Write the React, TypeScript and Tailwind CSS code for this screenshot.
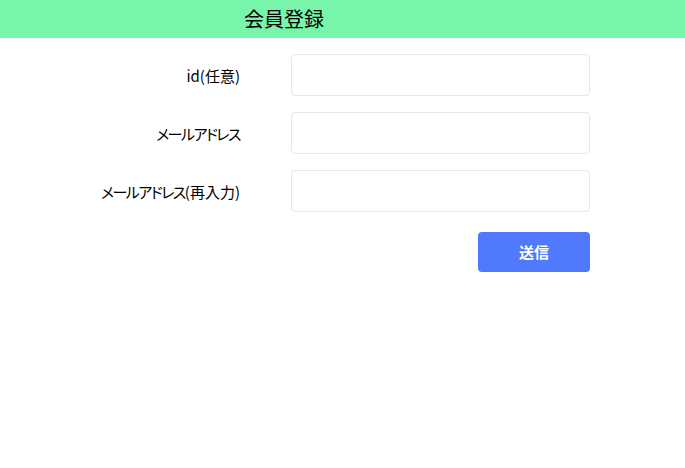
const fields: [string, string][] = [
  ['', 'id(任意)'],
  ['メールアドレス', ''],
  ['メールアドレス', '(再入力)'],
]

export default function App() {
  return (
    <div className="min-h-[468px] bg-white text-black" style={{ fontFamily: '"Noto Sans CJK JP", "Noto Sans", sans-serif' }}>
      <header className="h-[38px] bg-[#77f5ab] pl-[244px] flex items-center">
        <h1 className="text-[20px] leading-none">会員登録</h1>
      </header>

      <form className="pt-4 flex flex-col gap-4" onSubmit={(e) => e.preventDefault()}>
        {fields.map(([kana, rest]) => (
          <div key={kana + rest} className="flex items-center">
            <label className="w-[240px] text-right text-[15px] leading-none [font-feature-settings:'palt']">
              {kana && <span className="tracking-[-1.5px]">{kana}</span>}
              {rest}
            </label>
            <input
              type="text"
              className="ml-[51px] w-[299px] h-[42px] border border-[#e6e6e6] rounded-[4px] px-3 outline-none"
            />
          </div>
        ))}
        <div className="flex pl-[478px] pt-1">
          <button
            type="submit"
            className="w-[112px] h-[40px] rounded-[4px] bg-[#5079fe] text-white text-[15px] font-bold"
          >
            送信
          </button>
        </div>
      </form>
    </div>
  )
}
